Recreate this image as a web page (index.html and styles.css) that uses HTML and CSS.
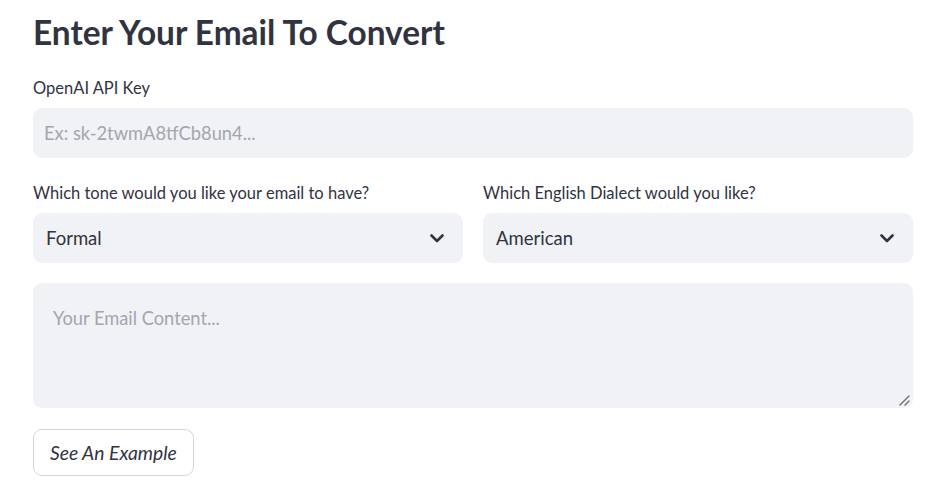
FILE: index.html
```html
<!DOCTYPE html>
<html>
<head>
<meta charset="utf-8">
<link rel="stylesheet" href="styles.css">
</head>
<body>
<main class="main">
  <h1 class="title">Enter Your Email To Convert</h1>

  <div class="field">
    <label class="label">OpenAI API Key</label>
    <div class="input"><span class="placeholder">Ex: sk-2twmA8tfCb8un4...</span></div>
  </div>

  <div class="row">
    <div class="field col">
      <label class="label">Which tone would you like your email to have?</label>
      <div class="select">
        <span class="value">Formal</span>
        <svg class="chev" width="14" height="9" viewBox="0 0 14 9"><path d="M1.5 1.5 L7 7 L12.5 1.5" fill="none" stroke="#31333F" stroke-width="2.6" stroke-linecap="round" stroke-linejoin="round"/></svg>
      </div>
    </div>
    <div class="field col">
      <label class="label">Which English Dialect would you like?</label>
      <div class="select">
        <span class="value">American</span>
        <svg class="chev" width="14" height="9" viewBox="0 0 14 9"><path d="M1.5 1.5 L7 7 L12.5 1.5" fill="none" stroke="#31333F" stroke-width="2.6" stroke-linecap="round" stroke-linejoin="round"/></svg>
      </div>
    </div>
  </div>

  <div class="textarea">
    <span class="placeholder ta-ph">Your Email Content...</span>
    <svg class="grip" width="12" height="12" viewBox="0 0 12 12"><path d="M2 11 L11 2 M7 11 L11 7" stroke="#6b6d76" stroke-width="1.4" stroke-linecap="round"/></svg>
  </div>

  <div class="btn-wrap"><button class="btn">See An Example</button></div>
</main>
</body>
</html>
```

FILE: styles.css
```css
* { box-sizing: border-box; }
html, body { margin: 0; padding: 0; background: #ffffff; }
body {
  font-family: Lato, "Liberation Sans", sans-serif;
  color: #31333F;
  width: 932px;
  height: 486px;
  overflow: hidden;
}
.main {
  display: flex;
  flex-direction: column;
  gap: 20px;
  padding: 0 19px 0 33px;
}
.title {
  margin: 0;
  height: 53px;
  padding-top: 12px;
  font-size: 33.4px;
  line-height: 40px;
  font-weight: 700;
  letter-spacing: 0;
  color: #31333F;
}
.field { display: flex; flex-direction: column; }
.label {
  font-size: 16.5px;
  line-height: 28px;
  padding-top: 1px;
  margin-bottom: 6px;
}
.input, .select {
  height: 50px;
  background: #f0f2f6;
  border-radius: 9px;
  display: flex;
  align-items: center;
}
.input { padding-left: 11px; }
.placeholder { color: #a4a6ae; font-size: 18.3px; }
.row { display: flex; gap: 20px; }
.col { flex: 1 1 0; min-width: 0; }
.select { padding: 0 19px 0 13px; justify-content: space-between; }
.value { font-size: 18.5px; color: #31333F; }
.chev { display: block; margin-top: 1px; }
.textarea {
  position: relative;
  height: 125px;
  background: #f0f2f6;
  border-radius: 9px;
  padding: 21px 20px;
}
.ta-ph { line-height: 28px; }
.grip { position: absolute; right: 3px; bottom: 2px; }
.btn-wrap { padding-top: 1px; }
.btn {
  height: 47px;
  padding: 0 16px;
  background: #ffffff;
  border: 1px solid #d6d6d9;
  border-radius: 9px;
  font-family: Lato, "Liberation Sans", sans-serif;
  font-style: italic;
  font-size: 19.3px;
  color: #31333F;
}
```
